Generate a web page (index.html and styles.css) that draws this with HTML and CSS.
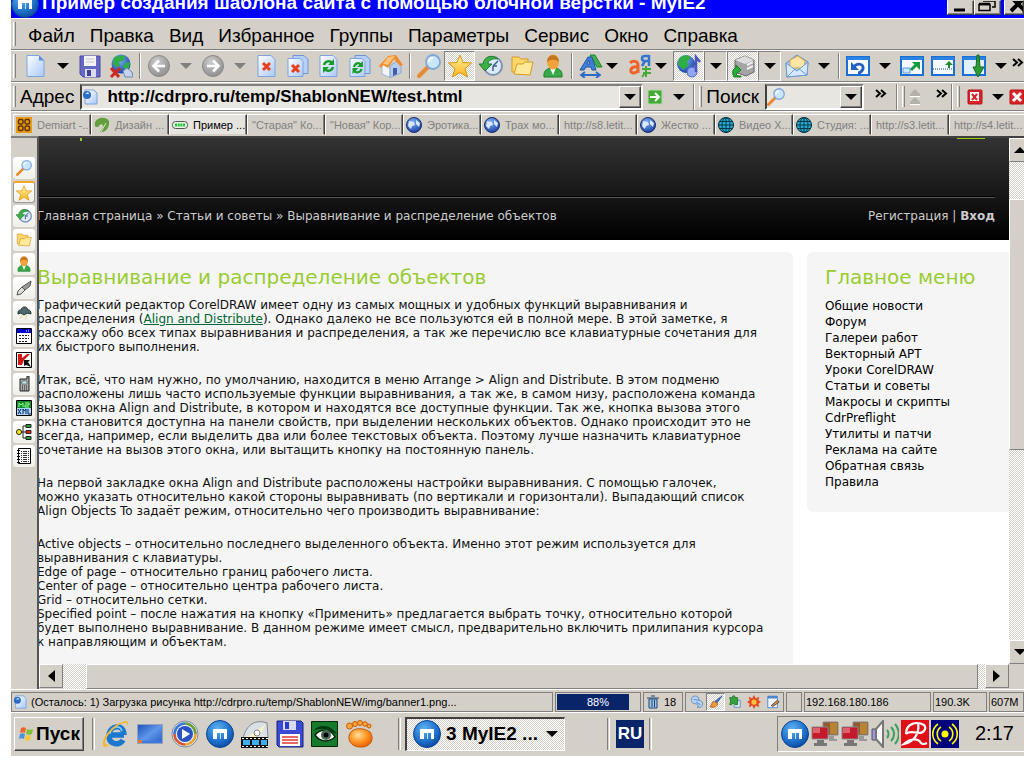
FILE: index.html
```html
<!DOCTYPE html>
<html lang="ru">
<head>
<meta charset="utf-8">
<title>Пример создания шаблона сайта с помощью блочной верстки - MyIE2</title>
<link rel="stylesheet" href="styles.css">
</head>
<body>
<svg class="defs" aria-hidden="true">
<defs>
<linearGradient id="gPaper" x1="0" y1="0" x2="1" y2="1"><stop offset="0" stop-color="#fff"/><stop offset="1" stop-color="#a9c8f8"/></linearGradient>
<radialGradient id="gBlue" cx=".4" cy=".3" r=".8"><stop offset="0" stop-color="#5fb2f2"/><stop offset=".6" stop-color="#1d6fc9"/><stop offset="1" stop-color="#0a3f94"/></radialGradient>
<radialGradient id="gGrey" cx=".4" cy=".3" r=".8"><stop offset="0" stop-color="#ccc"/><stop offset="1" stop-color="#888"/></radialGradient>
<radialGradient id="gOrange" cx=".4" cy=".35" r=".7"><stop offset="0" stop-color="#ffe0a0"/><stop offset=".5" stop-color="#ff9a2a"/><stop offset="1" stop-color="#e85a00"/></radialGradient>
<radialGradient id="gGlobe" cx=".4" cy=".3" r=".8"><stop offset="0" stop-color="#7fb4f5"/><stop offset="1" stop-color="#10349c"/></radialGradient>
<linearGradient id="gDesk" x1="0" y1="0" x2="1" y2="1"><stop offset="0" stop-color="#1d4fb8"/><stop offset=".5" stop-color="#5f97ea"/><stop offset="1" stop-color="#2a5cc4"/></linearGradient>
<linearGradient id="gGold" x1="0" y1="0" x2="0" y2="1"><stop offset="0" stop-color="#fff3a0"/><stop offset="1" stop-color="#f7b51c"/></linearGradient>
</defs>
<symbol id="i-new" viewBox="0 0 24 24"><path d="M3 1.500h12l5 5v16H3z" fill="url(#gPaper)" stroke="#7fa3dc"/><path d="M15 1.500v5h5z" fill="#5b8de0"/></symbol>
<symbol id="i-save" viewBox="0 0 24 24"><path d="M2 2h20v21H5l-3-3z" fill="#6767c4" stroke="#4b4ba8"/><path d="M6 2h12v10H6z" fill="#f4f4f4"/><path d="M8 5h8M8 8h8" stroke="#c4c4c4"/><path d="M7 15h11v8H7z" fill="#dcdcee"/><path d="M9 16h4v6H9z" fill="#3f3f9c"/></symbol>
<symbol id="i-netoff" viewBox="0 0 24 24"><circle cx="12" cy="10" r="9.500" fill="url(#gGlobe)"/><path d="M5 4c4-3 9-3 11-1l-2 4-4 1 1 4-4 1-3-3zM16 9l5-1-1 6-4 2-2-3z" fill="#2fae44"/><path d="M14 17l4-3 5 4 1 5h-8z" fill="#c4d4ec" stroke="#6f86b0"/><path d="M2 14l8 9M11 14l-9 9" stroke="#d0281e" stroke-width="3"/></symbol>
<symbol id="i-back" viewBox="0 0 24 24"><circle cx="12" cy="12" r="10.500" fill="url(#gGrey)" stroke="#888"/><path d="M18 12H7M12 6.500L6.500 12l5.500 5.500" fill="none" stroke="#fff" stroke-width="2.600"/></symbol>
<symbol id="i-fwd" viewBox="0 0 24 24"><circle cx="12" cy="12" r="10.500" fill="url(#gGrey)" stroke="#888"/><path d="M6 12h11M12 6.500l5.500 5.500-5.500 5.500" fill="none" stroke="#fff" stroke-width="2.600"/></symbol>
<symbol id="i-stop" viewBox="0 0 24 24"><path d="M3 1.500h13l4 4v17H3z" fill="url(#gPaper)" stroke="#7fa3dc"/><path d="M8 9l7 7M15 9l-7 7" stroke="#e8401c" stroke-width="3"/></symbol>
<symbol id="i-stopall" viewBox="0 0 24 24"><path d="M7 1.500h11l4 4v14H7z" fill="#b9d0f6" stroke="#6f93d4"/><path d="M2 4.500h12l3 3v15H2z" fill="url(#gPaper)" stroke="#7fa3dc"/><path d="M6 11l7 7M13 11l-7 7" stroke="#e8401c" stroke-width="3"/></symbol>
<symbol id="i-refresh" viewBox="0 0 24 24"><path d="M3 1.500h13l4 4v17H3z" fill="url(#gPaper)" stroke="#7fa3dc"/><path d="M7 11c1-4 6-5 8-2M16 13c-1 4-6 5-8 2" fill="none" stroke="#199a2a" stroke-width="2.400"/><path d="M17 5v6h-6zM6 19v-6h6z" fill="#199a2a"/></symbol>
<symbol id="i-refreshall" viewBox="0 0 24 24"><path d="M7 1.500h11l4 4v14H7z" fill="#b9d0f6" stroke="#6f93d4"/><path d="M2 4.500h12l3 3v15H2z" fill="url(#gPaper)" stroke="#7fa3dc"/><path d="M6 13c1-4 5-5 7-2M13.500 15c-1 4-6 4-7 2" fill="none" stroke="#199a2a" stroke-width="2.200"/><path d="M15 7v6H9zM4.500 20v-6h6z" fill="#199a2a"/></symbol>
<symbol id="i-home" viewBox="0 0 24 24"><path d="M3 12v8l8 3.500V14L8 8z" fill="#f4f6fc" stroke="#a3b4d6"/><path d="M11 23.500V12l7-5 4 5v7z" fill="#b7cdf0" stroke="#8ea6cf"/><path d="M0 12L9 2l8-1 7 10-3 1-6-7-6 9-5-3-2 3z" fill="#f28c28"/><path d="M9 3l7-1-7 9-5-1z" fill="#ffc27a"/><path d="M14 14h4v6l-4 2z" fill="#3f5fa8"/></symbol>
<symbol id="i-find" viewBox="0 0 24 24"><path d="M11 13l-9 9" stroke="#e78a32" stroke-width="4" stroke-linecap="round"/><circle cx="16" cy="8" r="7" fill="#c9e6fb" stroke="#7da7dc" stroke-width="1.800"/><path d="M12 8c0-3 2-4 4-4" stroke="#fff" stroke-width="2" fill="none"/></symbol>
<symbol id="i-star" viewBox="0 0 24 24"><path d="M12 1l3 7.500 8.500.5-6.500 5.500 2.500 8.500-7.500-4.500L4.500 23l2.500-8.500L.500 9 9 8.500z" fill="url(#gGold)" stroke="#d99412" stroke-linejoin="round"/></symbol>
<symbol id="i-history" viewBox="0 0 24 24"><circle cx="14" cy="12" r="9" fill="#dcebfa" stroke="#7d93b4" stroke-width="2"/><path d="M14 12l5-5M14 12h4M14 12v5" stroke="#43618f" stroke-width="1.500"/><path d="M19 5C14 0 5 2 4 10H0l6 7 7-7H9c0-4 5-6 10-5z" fill="#3fae49" stroke="#1f7d2c"/></symbol>
<symbol id="i-folder" viewBox="0 0 24 24"><path d="M2 3h7l2 2h7v13H2z" fill="#fbd66a" stroke="#d79b22"/><path d="M7 10h6l2-2h8l-3 13-16-1z" fill="#ffe99b" stroke="#d79b22"/></symbol>
<symbol id="i-user" viewBox="0 0 24 24"><path d="M3 23c-1-7 4-9 9-9s10 2 9 9z" fill="#37a948" stroke="#1e7f31"/><path d="M9 14l3 7 3-7z" fill="#fff"/><ellipse cx="12" cy="8" rx="6" ry="7.500" fill="#f0a23c"/><path d="M6 8c0-9 12-9 12 0-3-3-9-3-12 0z" fill="#c5751e"/></symbol>
<symbol id="i-afont" viewBox="0 0 24 24"><path d="M11 1h5l7 12h-5z" fill="#43b04c" stroke="#1f8230"/><path d="M1 16L9 3h4l4 13h-4l-1-3H7l-2 3zM8 10h3l-1-4z" fill="#3f80d8" stroke="#1d55a8"/><path d="M3 21h17M6 18l-4 3 4 3M17 18l4 3-4 3" fill="none" stroke="#2c6cc9" stroke-width="1.800"/></symbol>
<symbol id="i-atrans" viewBox="0 0 24 24"><path d="M2 9c3-3 8-2 8 2v8M10 13c-8-1-9 5-5 6 3 0 5-2 5-4" fill="none" stroke="#f0622c" stroke-width="3"/><path d="M21 1v11M21 2h-4c-4 0-4 5 0 5h4M17 7l-3 5" fill="none" stroke="#3274cf" stroke-width="2.500"/><path d="M14 15h9M18 12v11M15 19h8M14 23l3-4" fill="none" stroke="#43ab39" stroke-width="2"/></symbol>
<symbol id="i-music" viewBox="0 0 24 24"><circle cx="9" cy="10" r="9" fill="url(#gGlobe)"/><path d="M2 5c4-5 9-4 12-2l-4 5 2 3-6 5-5-6z" fill="#2fae44"/><circle cx="15" cy="18" r="5" fill="#8fa7f0" stroke="#4d61c4"/><path d="M19 18V3l4 5" fill="none" stroke="#4a55b8" stroke-width="2.500"/></symbol>
<symbol id="i-print" viewBox="0 0 24 24"><path d="M4 6l10-4 9 4v12l-8 4-11-4z" fill="#a4a4a4" stroke="#666"/><path d="M4 6l10-4 9 4-9 4z" fill="#ddd"/><path d="M16 11l6-3M16 15l6-3" stroke="#eee" stroke-width="2"/><path d="M10 23H3c-3-6 0-9 2-9V11l5 5-5 4c1 2 3 2 5 2z" fill="#27ae38" stroke="#127a22"/></symbol>
<symbol id="i-mail" viewBox="0 0 24 24"><path d="M1 9L12 1l11 7-1 13-20 2z" fill="#9fc6f4" stroke="#5f8fd0"/><path d="M5 6l8-4 7 5-1 7H5z" fill="#ffe6a6" stroke="#d9a541"/><path d="M1 9l11 8 11-9-1 13-20 2z" fill="#d5e9fc" stroke="#6b9ad6"/><path d="M2 23l8-8M22 21l-8-6" stroke="#6b9ad6"/></symbol>
<symbol id="i-win" viewBox="0 0 24 20"><path d="M1 1h22v18H1z" fill="#f4f9ff" stroke="#1a6fd0" stroke-width="2"/><path d="M1 1h22v3H1z" fill="#2b83e6"/></symbol>
<symbol id="i-undo" viewBox="0 0 24 20"><use href="#i-win"/><path d="M8 11c3-5 10-3 9 2-1 2-3 4-5 4" fill="none" stroke="#245fc0" stroke-width="2.800"/><path d="M5 6v8h8z" fill="#245fc0"/></symbol>
<symbol id="i-max" viewBox="0 0 24 20"><use href="#i-win"/><path d="M3 12h7v5H3z" fill="#cfe4fb" stroke="#5b9be2"/><path d="M11 14l5-5" stroke="#189a3c" stroke-width="3"/><path d="M12 6h8v8z" fill="#189a3c"/></symbol>
<symbol id="i-up" viewBox="0 0 24 20"><use href="#i-win"/><path d="M2 13h20" stroke="#1f4f90" stroke-dasharray="1 1"/><path d="M18 5l-4 4h3v3h2V9h3z" fill="#228a2c"/></symbol>
<symbol id="i-down" viewBox="0 0 24 22"><path d="M1 2h22v18H1z" fill="#e3effd" stroke="#1a6fd0" stroke-width="2"/><path d="M1 2h22v3H1z" fill="#2b83e6"/><path d="M15 0h2l1 12h4l-6 10-5-10h3z" fill="#2f9c38" stroke="#186a20"/></symbol>
<symbol id="i-page" viewBox="0 0 16 16"><path d="M3 1h9l3 3v11H3z" fill="url(#gPaper)" stroke="#7fa3dc"/><circle cx="5" cy="6" r="4" fill="#2b6cc4"/><path d="M3 5l3-2 1 2z" fill="#d4ecff"/></symbol>
<symbol id="i-go" viewBox="0 0 16 16"><rect x="1" y="1" width="14" height="14" rx="1" fill="#42ab36" stroke="#b8d8b0"/><path d="M3 8h9M8 4l4 4-4 4" fill="none" stroke="#fff" stroke-width="2"/></symbol>
<symbol id="i-chev" viewBox="0 0 12 10"><path d="M1 1l4 3.500L1 8M6 1l4 3.500L6 8" fill="none" stroke="#000" stroke-width="2"/></symbol>
<symbol id="i-raise" viewBox="0 0 12 16"><path d="M6 0l5 5v2H1V5zM6 8l5 5v2H1v-2z" fill="#b5b1aa"/><path d="M1 7.500h10M1 15.500h10" stroke="#fff"/></symbol>
<symbol id="i-redx" viewBox="0 0 16 16"><rect x="1" y="1" width="14" height="14" rx="1" fill="#d9252a" stroke="#b01318"/><path d="M3 3h9v9H3z" fill="#fff"/><path d="M5 5l5 6M10 5l-5 6" stroke="#d9252a" stroke-width="2"/></symbol>
<symbol id="i-redx2" viewBox="0 0 16 16"><rect x="1" y="1" width="14" height="14" rx="1" fill="#d9252a" stroke="#b01318"/><path d="M4 4l8 8M12 4l-8 8" stroke="#fff" stroke-width="3"/></symbol>
<symbol id="i-demi" viewBox="0 0 16 16"><path d="M0 0h16v16H0z" fill="#e99a16"/><rect x="2.500" y="2.500" width="4.500" height="4.500" rx="1.500" fill="none" stroke="#5a3606" stroke-width="1.500"/><rect x="9" y="2.500" width="4.500" height="4.500" rx="1.500" fill="none" stroke="#5a3606" stroke-width="1.500"/><rect x="2.500" y="9" width="4.500" height="4.500" rx="1.500" fill="none" stroke="#5a3606" stroke-width="1.500"/><rect x="9" y="9" width="4.500" height="4.500" rx="1.500" fill="none" stroke="#5a3606" stroke-width="1.500"/></symbol>
<symbol id="i-leaf" viewBox="0 0 16 16"><path d="M1 9c-2-8 10-11 14-5 1 8-5 12-9 11l3-5c1-3-3-4-4-1-1 1-2 2-4 0z" fill="#629e3c"/><path d="M7 15l5-9" stroke="#d6e9c6"/></symbol>
<symbol id="i-load" viewBox="0 0 16 16"><rect x="0.500" y="4.500" width="15" height="7" rx="3" fill="#e8f3e8" stroke="#555"/><path d="M3 8h10" stroke="#22c332" stroke-width="3" stroke-dasharray="2 .7"/></symbol>
<symbol id="i-globe" viewBox="0 0 16 16"><circle cx="8" cy="8" r="7.500" fill="url(#gGlobe)" stroke="#1c2f6a"/><path d="M3 4l5 1 1 3-3 1-1 3-3-3zM10 3l4 3-1 4-3-3z" fill="#dbe8fb"/></symbol>
<symbol id="i-grid" viewBox="0 0 16 16"><circle cx="8" cy="8" r="7.500" fill="#2aa9cf" stroke="#04272f"/><path d="M8 0v16M0 8h16M1 4.500h14M1 11.500h14" stroke="#05384a"/><ellipse cx="8" cy="8" rx="4" ry="7.500" fill="none" stroke="#05384a"/></symbol>
<symbol id="i-knife" viewBox="0 0 16 16"><path d="M15 1l-1 5-5 4-3-3z" fill="#999" stroke="#555"/><path d="M6 7l3 3-4 4-4 1 1-4z" fill="#ddd" stroke="#555"/></symbol>
<symbol id="i-cloud" viewBox="0 0 16 16"><path d="M2 9c0-3 2-3 3-3 1-4 6-4 7 0 2 0 3 1 3 4l-4-1-3 2-3-2-3 1z" fill="#4e6a6c" stroke="#1e3234"/><path d="M6 11l-2 4M11 11l-2 4" stroke="#e6d98a"/></symbol>
<symbol id="i-cal" viewBox="0 0 16 16"><path d="M.500.500h15v15H.500z" fill="#fff" stroke="#000"/><path d="M1 1h14v4H1z" fill="#00c"/><path d="M10 3h4" stroke="#fff" stroke-dasharray="1 1"/><path d="M3 7.500h10M3 10.500h10M3 13.500h8" stroke="#222" stroke-dasharray="2 1"/></symbol>
<symbol id="i-kav" viewBox="0 0 16 16"><path d="M.500.500h15v15H.500z" fill="#fff" stroke="#000"/><path d="M2 2h4v4l5-4h3L8 8l-2 5H2z" fill="#d01818"/><path d="M8 8h6l-2 2 3 5-5-2-2 1z" fill="#111"/></symbol>
<symbol id="i-phone" viewBox="0 0 16 16"><path d="M4 3h7V0h2v15H4z" fill="#aaa" stroke="#222"/><path d="M6 5h5v3H6z" fill="#bfe8ea" stroke="#333" stroke-width=".5"/><path d="M6 10h5M6 12h5M6 14h5" stroke="#222" stroke-dasharray="1 1"/></symbol>
<symbol id="i-xml" viewBox="0 0 16 16"><path d="M.500.500h15v15H.500z" fill="#a8d8f4" stroke="#000"/><path d="M1 1h14v7H1z" fill="#118c28"/><path d="M3 7V3l2 2 2-2v4M9 3h4v2H9v2h4" fill="none" stroke="#9f9"/><path d="M2 9l3 5M5 9l-3 5M7 14V9l1.500 2L10 9v5M12 9v5h3" fill="none" stroke="#026"/></symbol>
<symbol id="i-tree" viewBox="0 0 16 16"><path d="M3 8h7M7 2v12M7 2h3M7 14h3" fill="none" stroke="#222"/><circle cx="3" cy="8" r="2.500" fill="#fe0" stroke="#222"/><path d="M10 .500h5v3h-5zM10 12.500h5v3h-5z" fill="#1da83c" stroke="#222"/><path d="M10 6.500h5v3h-5z" fill="#e02020" stroke="#222"/></symbol>
<symbol id="i-note" viewBox="0 0 16 16"><path d="M2.500.500h12v15h-12z" fill="#fff" stroke="#000"/><path d="M5 3.500h8M5 5.500h8M5 7.500h8M5 9.500h8M5 11.500h8M5 13.500h8" stroke="#333" stroke-dasharray="1 1 4 1"/><path d="M1 2.500h3M1 5.500h3M1 8.500h3M1 11.500h3M1 14.500h3" stroke="#000"/></symbol>
<symbol id="i-myie" viewBox="0 0 28 28"><circle cx="14" cy="14" r="13.500" fill="url(#gBlue)" stroke="#0b4596"/><path d="M7 9h14v10h-3v-6h-7v6H7z" fill="#fff"/><path d="M14 13h1v6h-1z" fill="#cfe2f8"/></symbol>
<symbol id="i-flag" viewBox="0 0 16 16"><path d="M3 2c2-1 3-1 5 0L7 7C5 6 4 6 2 7z" fill="#f2622a"/><path d="M9 3c2 1 4 1 6 0l-1 5c-2 1-4 1-6 0z" fill="#7cc03a"/><path d="M2 8c2-1 3-1 5 0l-1 5c-2-1-3-1-5 0z" fill="#4b93e0"/><path d="M8 9c2 1 3 1 5 0l-1 5c-2 1-3 1-5 0z" fill="#fbc62c"/></symbol>
<symbol id="i-ie" viewBox="0 0 28 28"><path d="M23 15H10M23 15c0-12-15-10-15 1 0 9 11 10 14 4" fill="none" stroke="#1c78cf" stroke-width="5.500"/><path d="M21 11c-2-6-11-5-12 3" fill="none" stroke="#8fd2fa" stroke-width="1.500"/><path d="M3 27C-2 20 12 3 25 1c3 1 2 4 1 6 1-3 0-4-2-4C15 4 5 16 4 22c0 3 3 3 5 2-2 2-4 3-6 3z" fill="#f6b62b"/></symbol>
<symbol id="i-desk" viewBox="0 0 28 28"><path d="M1.500 4.500h25v19h-25z" fill="url(#gDesk)" stroke="#8fa2b8"/><path d="M2 21h24v2H2z" fill="#3e79df"/><path d="M2 20h4v3H2z" fill="#e0793a"/></symbol>
<symbol id="i-wmp" viewBox="0 0 28 28"><circle cx="14" cy="14" r="13" fill="#e8eef6" stroke="#7c8a9c"/><path d="M14 3.500a10.500 10.500 0 0 1 10.500 10.500" fill="none" stroke="#6a9f34" stroke-width="2.500"/><path d="M24.500 14a10.500 10.500 0 0 1-10.500 10.500" fill="none" stroke="#e8a426" stroke-width="2.500"/><path d="M14 24.500A10.500 10.500 0 0 1 3.500 14" fill="none" stroke="#d6542a" stroke-width="2.500"/><path d="M3.500 14A10.500 10.500 0 0 1 14 3.500" fill="none" stroke="#3e76d8" stroke-width="2.500"/><circle cx="14" cy="14" r="8" fill="#2b52c4"/><path d="M11 9l8 5-8 5z" fill="#fff"/></symbol>
<symbol id="i-disc" viewBox="0 0 28 28"><path d="M2 19C5 4 15-1 26 3l1 15z" fill="#dadfe6" stroke="#7c8794"/><path d="M6 17L25 4l-8 14z" fill="#f6f2c4"/><circle cx="16" cy="13" r="3" fill="#fff" stroke="#888"/><path d="M0 17h27v11H0z" fill="#111"/><path d="M2 20h7v5H2zM11 20h7v5h-7zM20 20h6v5h-6z" fill="#3cb0ec"/><path d="M1 18.500h26M1 26.500h26" stroke="#fff" stroke-dasharray="2 2"/></symbol>
<symbol id="i-tc" viewBox="0 0 28 28"><path d="M1 1h24l2 2v24H3l-2-2z" fill="#3a4ad4" stroke="#14207c"/><path d="M7 1h13v9H7z" fill="#d8dcec"/><path d="M9 2h4v7H9z" fill="#2a3aca"/><path d="M4 14h20v12H4z" fill="#fff"/><path d="M6 17h16M6 20h16M6 23h16" stroke="#e03434" stroke-width="1.500"/></symbol>
<symbol id="i-eye" viewBox="0 0 28 28"><path d="M.500 1.500h26v25H.500z" fill="#157a2c" stroke="#032c0c"/><path d="M2 11C9 3 20 5 26 14l-5-2C15 8 8 8 2 11z" fill="#031"/><path d="M4 15c6-7 16-6 20 2-7 6-15 5-20-2z" fill="#f4f8ee" stroke="#021" stroke-width="1.500"/><circle cx="15" cy="15" r="5" fill="#4a6d54"/><circle cx="15" cy="15" r="2.500" fill="#001"/></symbol>
<symbol id="i-foot" viewBox="0 0 28 28"><path d="M3 16c2-9 14-9 21-4 6 9-2 16-10 15-7 0-12-5-11-11z" fill="url(#gOrange)" stroke="#c65a08"/><g fill="#ffa63c" stroke="#c65a08"><circle cx="3.500" cy="6" r="3"/><circle cx="9" cy="4" r="2.500"/><circle cx="14" cy="3" r="2.500"/><circle cx="19" cy="4" r="2.300"/><circle cx="23" cy="6" r="2"/></g></symbol>
<symbol id="i-lan" viewBox="0 0 28 28"><path d="M12 2h15v13H12z" fill="#8f5a30" stroke="#888"/><path d="M19 3h7v11h-7z" fill="#b98432"/><path d="M18 16h5v3h3v2h-8z" fill="#999"/><path d="M1 7h16v12H1z" fill="#c41a2c" stroke="#888"/><path d="M2 8h7v5H2z" fill="#e0606c"/><path d="M6 20h7v3h3v3H3v-3h3z" fill="#777"/></symbol>
<symbol id="i-vol" viewBox="0 0 28 28"><path d="M1 9h4v11H1z" fill="#9a98e0" stroke="#555"/><path d="M5 9l7-8v26l-7-8z" fill="#f6f6f6" stroke="#777" stroke-width="2"/><path d="M16 10c2 2 2 6 0 8M20 7c4 4 4 10 0 14M24 4c5 6 5 14 0 20" fill="none" stroke="#3f9f5c" stroke-width="2"/></symbol>
<symbol id="i-avira" viewBox="0 0 28 28"><path d="M0 0h28v28H0z" fill="#e01018"/><path d="M5 14C5 3 16 1 23 5c3 3 0 8-5 8-5-1-10-2-13 1M17 4c2 9-4 18-14 20 7-6 14-6 17-1 2 2 4 1 6 0" fill="none" stroke="#fff" stroke-width="2.200"/></symbol>
<symbol id="i-radio" viewBox="0 0 28 28"><path d="M0 0h28v28H0z" fill="#00007c"/><circle cx="14" cy="14" r="3.500" fill="#ff0"/><path d="M10 7c-5 3-5 11 0 14M18 7c5 3 5 11 0 14M7 4c-7 5-7 15 0 20M21 4c7 5 7 15 0 20" fill="none" stroke="#ff0" stroke-width="1.600"/></symbol>
<symbol id="i-trash" viewBox="0 0 12 14"><path d="M2 4h8v9H2z" fill="#9cc3ee" stroke="#24456e"/><path d="M0 3h12M4 1h4M5 5v7M7.500 5v7" stroke="#24456e"/></symbol>
<symbol id="i-cloudlink" viewBox="0 0 16 16"><path d="M2 3c4-4 9-1 8 3 5 0 6 6 2 8H8c3-2 1-4-2-4-4 0-5-4-4-7z" fill="#b4d3f6" stroke="#5a86c4"/><path d="M4 5l6 1M7 8l5 3" stroke="#5a86c4"/></symbol>
<symbol id="i-brush" viewBox="0 0 16 16"><path d="M15 1l-6 8-2-2z" fill="#3b7ad2" stroke="#255a9f"/><path d="M1 13c2-1 2-5 5-6l4 3c-1 4-6 5-9 3z" fill="#ee9a35" stroke="#a9581a"/></symbol>
<symbol id="i-puzzle" viewBox="0 0 16 16"><path d="M7 6h7v8H7z" fill="#e4eefc" stroke="#5a86c4"/><path d="M2 3h3c0-3 3-3 3 0h3v8H8L6 9l-2 2H2l1-4z" fill="#35a33c" stroke="#1d7326"/></symbol>
<symbol id="i-sun" viewBox="0 0 16 16"><path d="M8 0l2 4 4-2-1 4 3 2-3 2 1 4-4-2-2 4-2-4-4 2 1-4-3-2 3-2-1-4 4 2z" fill="#e8461c"/><circle cx="8" cy="8" r="3" fill="#ffc23c"/></symbol>
<symbol id="i-edit" viewBox="0 0 16 16"><path d="M2 1.500h11v13H2z" fill="#f0f7ff" stroke="#4b86cf"/><path d="M2 1h11v3H2z" fill="#4b86cf"/><path d="M6 12l7-6 2 2-7 5z" fill="#f08c3a" stroke="#345"/></symbol>
</svg>

<div class="screen">
  <header class="titlebar">
    <svg class="ico-28"><use href="#i-myie"/></svg>
    <h1 class="title">Пример создания шаблона сайта с помощью блочной верстки - MyIE2</h1>
    <div class="winbtns">
      <button class="winbtn" aria-label="Свернуть"><svg viewBox="0 0 24 16"><path d="M5 10h11" stroke="#000" stroke-width="3"/></svg></button>
      <button class="winbtn" aria-label="Восстановить"><svg viewBox="0 0 24 16"><path d="M7 1h12v6h-3M3 4.500h11v6H3z" fill="none" stroke="#000" stroke-width="1.500"/><path d="M3 4h11" stroke="#000" stroke-width="2.500"/></svg></button>
      <button class="winbtn winbtn-close" aria-label="Закрыть"><svg viewBox="0 0 24 16"><path d="M7 -2l13 13M19 -2L6 11" stroke="#000" stroke-width="4"/></svg></button>
    </div>
  </header>

  <nav class="bar menubar"><i class="grip"></i>
    <button class="menu">Файл</button><button class="menu">Правка</button><button class="menu">Вид</button><button class="menu">Избранное</button><button class="menu">Группы</button><button class="menu">Параметры</button><button class="menu">Сервис</button><button class="menu">Окно</button><button class="menu">Справка</button>
  </nav>

  <div class="bar toolbar"><i class="grip"></i>
    <button class="tool" aria-label="Создать"><svg class="ico-24"><use href="#i-new"/></svg></button><button class="drop" aria-label="Ещё"></button>
    <button class="tool" aria-label="Сохранить"><svg class="ico-24"><use href="#i-save"/></svg></button>
    <button class="tool" aria-label="Автономно"><svg class="ico-24"><use href="#i-netoff"/></svg></button>
    <i class="sep"></i>
    <button class="tool" aria-label="Назад"><svg class="ico-24"><use href="#i-back"/></svg></button><button class="drop drop-off" aria-label="Ещё"></button>
    <button class="tool" aria-label="Вперёд"><svg class="ico-24"><use href="#i-fwd"/></svg></button><button class="drop drop-off" aria-label="Ещё"></button>
    <button class="tool" aria-label="Стоп"><svg class="ico-24"><use href="#i-stop"/></svg></button>
    <button class="tool" aria-label="Остановить все"><svg class="ico-24"><use href="#i-stopall"/></svg></button>
    <button class="tool" aria-label="Обновить"><svg class="ico-24"><use href="#i-refresh"/></svg></button>
    <button class="tool" aria-label="Обновить все"><svg class="ico-24"><use href="#i-refreshall"/></svg></button>
    <button class="tool" aria-label="Домой"><svg class="ico-24"><use href="#i-home"/></svg></button>
    <i class="sep"></i>
    <button class="tool" aria-label="Поиск"><svg class="ico-24"><use href="#i-find"/></svg></button>
    <button class="tool pressed" aria-label="Избранное"><svg class="ico-24"><use href="#i-star"/></svg></button>
    <button class="tool" aria-label="Журнал"><svg class="ico-24"><use href="#i-history"/></svg></button>
    <button class="tool" aria-label="Папки"><svg class="ico-24"><use href="#i-folder"/></svg></button>
    <button class="tool" aria-label="Пользователь"><svg class="ico-24"><use href="#i-user"/></svg></button>
    <i class="sep"></i>
    <button class="tool" aria-label="Размер шрифта"><svg class="ico-24"><use href="#i-afont"/></svg></button><button class="drop drop-tight" aria-label="Ещё"></button>
    <button class="tool" aria-label="Кодировка"><svg class="ico-24"><use href="#i-atrans"/></svg></button><button class="drop drop-tight" aria-label="Ещё"></button>
    <button class="tool pressed" aria-label="Мультимедиа"><svg class="ico-24"><use href="#i-music"/></svg></button><button class="drop drop-boxed" aria-label="Ещё"></button>
    <button class="tool pressed" aria-label="Прокси"><svg class="ico-24"><use href="#i-print"/></svg></button><button class="drop drop-boxed" aria-label="Ещё"></button>
    <button class="tool" aria-label="Почта"><svg class="ico-24"><use href="#i-mail"/></svg></button><button class="drop" aria-label="Ещё"></button>
    <i class="sep"></i>
    <button class="tool" aria-label="Отменить"><svg class="ico-24"><use href="#i-undo"/></svg></button><button class="drop" aria-label="Ещё"></button>
    <button class="tool" aria-label="Развернуть"><svg class="ico-24"><use href="#i-max"/></svg></button>
    <button class="tool" aria-label="Вверх"><svg class="ico-24"><use href="#i-up"/></svg></button>
    <button class="tool" aria-label="Вниз"><svg class="ico-24"><use href="#i-down"/></svg></button><button class="drop" aria-label="Ещё"></button>
    <svg class="chev"><use href="#i-chev"/></svg>
  </div>

  <div class="bar addressbar"><i class="grip"></i>
    <label class="bar-label" for="addr">Адрес</label>
    <div class="combo combo-wide"><svg class="ico-16"><use href="#i-page"/></svg><input class="addr" id="addr" type="text" value="http://cdrpro.ru/temp/ShablonNEW/test.html"><button class="combo-btn" aria-label="Список адресов"></button></div>
    <button class="go" aria-label="Переход"><svg class="ico-16"><use href="#i-go"/></svg></button><button class="drop" aria-label="Ещё"></button>
    <i class="sep"></i><i class="grip"></i>
    <label class="bar-label" for="find">Поиск</label>
    <div class="combo combo-find"><svg class="ico-18"><use href="#i-find"/></svg><input class="find" id="find" type="text"><button class="combo-btn" aria-label="Список запросов"></button></div>
    <svg class="chev chev-find"><use href="#i-chev"/></svg>
    <i class="sep"></i><i class="grip"></i>
    <svg class="raise"><use href="#i-raise"/></svg><svg class="chev chev-raise"><use href="#i-chev"/></svg>
    <i class="sep"></i><i class="grip"></i>
    <button class="close-tab" aria-label="Закрыть вкладку"><svg class="ico-16"><use href="#i-redx"/></svg></button><button class="drop" aria-label="Ещё"></button>
    <button class="close-all" aria-label="Закрыть все"><svg class="ico-16"><use href="#i-redx2"/></svg></button>
  </div>

  <div class="tabs">
    <button class="tab"><svg class="ico-16"><use href="#i-demi"/></svg>Demiart -...</button>
    <button class="tab"><svg class="ico-16"><use href="#i-leaf"/></svg>Дизайн ...</button>
    <button class="tab tab-on"><svg class="ico-16"><use href="#i-load"/></svg>Пример ...</button>
    <button class="tab">"Старая" Ко...</button>
    <button class="tab">"Новая" Кор...</button>
    <button class="tab"><svg class="ico-16"><use href="#i-globe"/></svg>Эротика...</button>
    <button class="tab"><svg class="ico-16"><use href="#i-globe"/></svg>Трах мо...</button>
    <button class="tab">http://s8.letit...</button>
    <button class="tab"><svg class="ico-16"><use href="#i-globe"/></svg>Жестко ...</button>
    <button class="tab"><svg class="ico-16"><use href="#i-grid"/></svg>Видео X...</button>
    <button class="tab"><svg class="ico-16"><use href="#i-grid"/></svg>Студия: ...</button>
    <button class="tab">http://s3.letit...</button>
    <button class="tab">http://s4.letit...</button>
  </div>

  <div class="work">
    <aside class="rail">
      <button class="rail-btn" aria-label="Поиск"><svg class="ico-16"><use href="#i-find"/></svg></button>
      <button class="rail-btn rail-on" aria-label="Избранное"><svg class="ico-16"><use href="#i-star"/></svg></button>
      <button class="rail-btn" aria-label="Журнал"><svg class="ico-16"><use href="#i-history"/></svg></button>
      <button class="rail-btn" aria-label="Папки"><svg class="ico-16"><use href="#i-folder"/></svg></button>
      <button class="rail-btn" aria-label="Пользователь"><svg class="ico-16"><use href="#i-user"/></svg></button>
      <button class="rail-btn" aria-label="Нож"><svg class="ico-16"><use href="#i-knife"/></svg></button>
      <button class="rail-btn" aria-label="Погода"><svg class="ico-16"><use href="#i-cloud"/></svg></button>
      <button class="rail-btn" aria-label="Календарь"><svg class="ico-16"><use href="#i-cal"/></svg></button>
      <button class="rail-btn" aria-label="Антивирус"><svg class="ico-16"><use href="#i-kav"/></svg></button>
      <button class="rail-btn" aria-label="Телефон"><svg class="ico-16"><use href="#i-phone"/></svg></button>
      <button class="rail-btn" aria-label="XML"><svg class="ico-16"><use href="#i-xml"/></svg></button>
      <button class="rail-btn" aria-label="Дерево"><svg class="ico-16"><use href="#i-tree"/></svg></button>
      <button class="rail-btn" aria-label="Заметки"><svg class="ico-16"><use href="#i-note"/></svg></button>
    </aside>
    <div class="view">
      <div class="view-row">
        <main class="page">
          <header class="site-head">
            <div class="banner"><i class="tick"></i><i class="badge"></i></div>
            <div class="crumbs">
              <div><a href="#">Главная страница</a> » <a href="#">Статьи и советы</a> » Выравнивание и распределение объектов</div>
              <div><a href="#">Регистрация</a> | <a href="#"><b>Вход</b></a></div>
            </div>
          </header>
          <div class="columns">
            <article class="card article">
              <h2 class="heading">Выравнивание и распределение объектов</h2>
              <p class="para">Графический редактор CorelDRAW имеет одну из самых мощных и удобных функций выравнивания и<br>распределения (<a class="link" href="#">Align and Distribute</a>). Однако далеко не все пользуются ей в полной мере. В этой заметке, я<br>расскажу обо всех типах выравнивания и распределения, а так же перечислю все клавиатурные сочетания для<br>их быстрого выполнения.</p>
              <p class="para">Итак, всё, что нам нужно, по умолчанию, находится в меню Arrange &gt; Align and Distribute. В этом подменю<br>расположены лишь часто используемые функции выравнивания, а так же, в самом низу, расположена команда<br>вызова окна Align and Distribute, в котором и находятся все доступные функции. Так же, кнопка вызова этого<br>окна становится доступна на панели свойств, при выделении нескольких объектов. Однако происходит это не<br>всегда, например, если выделить два или более текстовых объекта. Поэтому лучше назначить клавиатурное<br>сочетание на вызов этого окна, или вытащить кнопку на постоянную панель.</p>
              <p class="para">На первой закладке окна Align and Distribute расположены настройки выравнивания. С помощью галочек,<br>можно указать относительно какой стороны выравнивать (по вертикали и горизонтали). Выпадающий список<br>Align Objects To задаёт режим, относительно чего производить выравнивание:</p>
              <p class="para">Active objects – относительно последнего выделенного объекта. Именно этот режим используется для<br>выравнивания с клавиатуры.<br>Edge of page – относительно границ рабочего листа.<br>Center of page – относительно центра рабочего листа.<br>Grid – относительно сетки.<br>Specified point – после нажатия на кнопку «Применить» предлагается выбрать точку, относительно которой<br>будет выполнено выравнивание. В данном режиме имеет смысл, предварительно включить прилипания курсора<br>к направляющим и объектам.</p>
            </article>
            <nav class="card sidemenu">
              <h2 class="heading">Главное меню</h2>
              <ul class="links">
                <li><a href="#">Общие новости</a></li><li><a href="#">Форум</a></li><li><a href="#">Галереи работ</a></li><li><a href="#">Векторный АРТ</a></li><li><a href="#">Уроки CorelDRAW</a></li><li><a href="#">Статьи и советы</a></li><li><a href="#">Макросы и скрипты</a></li><li><a href="#">CdrPreflight</a></li><li><a href="#">Утилиты и патчи</a></li><li><a href="#">Реклама на сайте</a></li><li><a href="#">Обратная связь</a></li><li><a href="#">Правила</a></li>
              </ul>
            </nav>
          </div>
        </main>
        <div class="vscroll">
          <button class="sbtn sbtn-v" aria-label="Вверх"><svg viewBox="0 0 12 6"><path d="M6 0l6 6H0z"/></svg></button>
          <div class="vgap"></div><div class="vthumb"></div><div class="vtrack"></div>
          <button class="sbtn sbtn-v" aria-label="Вниз"><svg viewBox="0 0 12 6"><path d="M6 6l6-6H0z"/></svg></button>
        </div>
      </div>
      <div class="hscroll">
        <button class="sbtn" aria-label="Влево"><svg class="harrow" viewBox="0 0 8 12"><path d="M8 0v12L1 6z"/></svg></button>
        <div class="hgap"></div><div class="hthumb"></div><div class="htrack"></div>
        <button class="sbtn" aria-label="Вправо"><svg class="harrow" viewBox="0 0 8 12"><path d="M0 0v12l7-6z"/></svg></button>
        <div class="corner"></div>
      </div>
    </div>
  </div>

  <footer class="status">
    <div class="cell cell-main"><svg class="ico-12"><use href="#i-page"/></svg>(Осталось: 1) Загрузка рисунка http://cdrpro.ru/temp/ShablonNEW/img/banner1.png...</div>
    <div class="cell cell-load"><div class="load" style="width:88%"></div><span class="load-text">88%</span></div>
    <div class="cell cell-trash"><svg class="ico-12"><use href="#i-trash"/></svg>18</div>
    <div class="cell cell-icons">
      <button class="mini" aria-label="Связь"><svg class="ico-12"><use href="#i-cloudlink"/></svg></button>
      <button class="mini pressed" aria-label="Кисть"><svg class="ico-12"><use href="#i-brush"/></svg></button>
      <button class="mini" aria-label="Модули"><svg class="ico-12"><use href="#i-puzzle"/></svg></button>
      <button class="mini" aria-label="Фильтр"><svg class="ico-12"><use href="#i-sun"/></svg></button>
      <button class="mini" aria-label="Правка"><svg class="ico-12"><use href="#i-edit"/></svg></button>
    </div>
    <div class="cell cell-blank"></div>
    <div class="cell cell-ip">192.168.180.186</div>
    <div class="cell cell-speed">190.3K</div>
    <div class="cell cell-mem">607M</div>
  </footer>

  <footer class="taskbar">
    <button class="start"><svg class="ico-16"><use href="#i-flag"/></svg>Пуск</button>
    <i class="tgrip"></i>
    <div class="quick">
      <button class="q" aria-label="Internet Explorer"><svg class="ico-28"><use href="#i-ie"/></svg></button>
      <button class="q" aria-label="Рабочий стол"><svg class="ico-28"><use href="#i-desk"/></svg></button>
      <button class="q" aria-label="Проигрыватель"><svg class="ico-28"><use href="#i-wmp"/></svg></button>
      <button class="q" aria-label="MyIE2"><svg class="ico-28"><use href="#i-myie"/></svg></button>
      <button class="q" aria-label="Видео"><svg class="ico-28"><use href="#i-disc"/></svg></button>
      <button class="q" aria-label="Файлы"><svg class="ico-28"><use href="#i-tc"/></svg></button>
      <button class="q" aria-label="Просмотр"><svg class="ico-28"><use href="#i-eye"/></svg></button>
      <button class="q" aria-label="GOM"><svg class="ico-28"><use href="#i-foot"/></svg></button>
    </div>
    <i class="tgrip tgrip-far"></i>
    <button class="task pressed"><svg class="ico-28"><use href="#i-myie"/></svg><span>3 MyIE2 ...</span><i class="caret"></i></button>
    <div class="spacer"></div>
    <i class="tgrip"></i>
    <button class="lang">RU</button>
    <i class="tgrip tgrip-end"></i>
    <div class="tray">
      <svg class="ico-28"><use href="#i-myie"/></svg><svg class="ico-28"><use href="#i-lan"/></svg><svg class="ico-28"><use href="#i-lan"/></svg><svg class="ico-28"><use href="#i-vol"/></svg><svg class="ico-28"><use href="#i-avira"/></svg><svg class="ico-28"><use href="#i-radio"/></svg>
      <time class="clock">2:17</time>
    </div>
  </footer>
</div>
</body>
</html>
```
FILE: styles.css
```css
* { box-sizing: border-box; }
body { margin: 0; background: #fff; font-family: "Liberation Sans", Arial, sans-serif; color: #000; }
button, input { font: inherit; color: inherit; margin: 0; padding: 0; border: 0; background: none; border-radius: 0; }
button { display: flex; align-items: center; justify-content: center; flex: none; }
svg { display: block; flex: none; }
a { color: inherit; text-decoration: none; }
.defs { position: absolute; width: 0; height: 0; }
.ico-12 { width: 14px; height: 14px; }
.ico-16 { width: 16px; height: 16px; }
.ico-18 { width: 18px; height: 18px; }
.ico-24 { width: 24px; height: 24px; }
.ico-28 { width: 28px; height: 28px; }

.screen { height: 100vh; padding: 0 0 12px 11px; display: flex; flex-direction: column; overflow: hidden; }
.screen > * { flex: none; white-space: nowrap; overflow: hidden; }

.titlebar { height: 18px; background: #00f; display: flex; align-items: flex-end; gap: 3px; }
.title { flex: 1; margin: 0; padding-bottom: 3px; font-size: 19px; line-height: 24px; color: #fff; }
.winbtns { display: flex; align-self: flex-start; }
.winbtn { width: 27px; height: 15px; background: #d4d0c8; border: 1px solid; border-color: transparent #404040 #404040 #fff; box-shadow: inset -1px -1px #808080; overflow: hidden; }
.winbtn svg { width: 24px; height: 16px; }
.winbtn-close { margin-left: 3px; width: 20px; justify-content: flex-start; }

.bar { display: flex; align-items: center; background: #d4d0c8; border-top: 1px solid #fff; border-bottom: 1px solid #808080; }
.grip { flex: none; width: 3px; margin: 3px 4px 3px 2px; align-self: stretch; border-left: 1px solid #fff; border-right: 1px solid #808080; }
.sep { flex: none; width: 2px; margin: 0 2px 0 3px; height: 26px; border-left: 1px solid #808080; border-right: 1px solid #fff; }
.menubar { height: 32px; padding-top: 3px; font-size: 19px; }
.menubar .grip { margin-top: 0; margin-right: 5px; }
.menu { padding: 0 8px 0 7px; line-height: 24px; }
.toolbar { height: 32px; }
.tool { width: 31px; height: 30px; }
.pressed { background: conic-gradient(#fff 25%, #d4d0c8 0 50%, #fff 0 75%, #d4d0c8 0) 0 0 / 2px 2px; border: 1px solid; border-color: #808080 #fff #fff #808080; }
.drop { width: 23px; height: 30px; }
.drop::before, .combo-btn::before, .caret { content: ""; width: 0; border: 6px solid transparent; border-top-color: #000; border-bottom: 0; }
.drop-off::before { border-top-color: #808080; }
.drop-tight { width: 12px; margin-right: 6px; }
.drop-boxed { border: 1px solid; border-color: #808080 #fff #fff #808080; }
.chev { width: 12px; height: 10px; margin-bottom: 6px; }

.addressbar { height: 29px; }
.bar-label { font-size: 19px; line-height: 24px; padding: 0 6px 0 0; }
.combo { display: flex; align-items: center; height: 26px; background: #e8e6e1; border: 2px solid; border-color: #808080 #fff #fff #404040; min-width: 0; }
.combo-wide { flex: 1; }
.combo-find { width: 99px; }
.addr { flex: 1; min-width: 0; padding-left: 9px; font-size: 17px; font-weight: bold; }
.find { flex: 1; min-width: 0; }
.combo-btn { width: 22px; height: 22px; background: #d4d0c8; border: 1px solid; border-color: #fff #404040 #404040 #fff; box-shadow: inset -1px -1px #808080; }
.go { width: 24px; }
.chev-find { margin-left: 11px; margin-right: 6px; }
.raise { width: 12px; height: 16px; margin: 0 11px 0 0; }
.chev-raise { margin-left: 4px; }
.close-tab { width: 22px; }
.close-all { width: 15px; justify-content: flex-start; }

.tabs { height: 25px; padding: 2px 0 1px 2px; background: #d4d0c8; border-top: 1px solid #fff; display: flex; }
.tab { width: 78px; justify-content: flex-start; gap: 5px; padding: 0 2px; overflow: hidden; font-size: 11px; color: #808080; border: 1px solid; border-color: #fff #404040 #d4d0c8 #fff; box-shadow: inset -1px 0 #808080; white-space: nowrap; }
.tab:not(:has(svg)) { padding-left: 4px; }
.tab-on { color: #000; background: #e6e4df; }

.screen > .work { flex: 1; min-height: 0; display: flex; background: #d4d0c8; }
.rail { flex: none; width: 28px; padding: 19px 2px 0; border-right: 2px solid #555; border-top: 2px solid #808080; }
.rail-btn { width: 22px; height: 22px; margin-bottom: 2px; border-radius: 3px; background: linear-gradient(#fff, #f0efea); }
.rail-on { border: 1px solid #999; border-top: 2px solid #f5a623; }
.view { flex: 1; min-width: 0; display: flex; flex-direction: column; border-top: 2px solid #404040; }
.view-row { flex: 1; min-height: 0; display: flex; }
.page { flex: 1; min-width: 0; overflow: hidden; background: #fff; font-family: "DejaVu Sans", Verdana, sans-serif; font-size: 12px; }
.site-head { height: 102px; padding-right: 14px; background: linear-gradient(#333, #000); color: #ccc; }
.banner { height: 60px; display: flex; justify-content: space-between; align-items: flex-start; padding: 0 10px 0 41px; border-bottom: 1px solid #555; box-shadow: inset 0 -1px #000; }
.tick { width: 2px; height: 3px; background: #9c3; }
.badge { width: 28px; height: 1px; background: #9c0; }
.crumbs { display: flex; justify-content: space-between; margin-left: -2px; padding-top: 10px; line-height: 16px; }
.columns { display: flex; align-items: flex-start; gap: 14px; margin: 12px -10px 0 -2px; }
.card { background: #f5f5f5; border-radius: 6px; padding: 14px 18px 22px; white-space: nowrap; }
.article { flex: 1; min-width: 0; min-height: 420px; padding-left: 0; }
.sidemenu { width: 212px; }
.heading { margin: 0 0 10px; font-size: 20px; line-height: 22px; font-weight: normal; color: #9c3; }
.para { margin: 0 0 19px; line-height: 14px; color: #111; }
.link { color: #063; text-decoration: underline; }
.links { list-style: none; margin: 0; padding: 0; line-height: 16px; }

.vscroll { flex: none; width: 15px; display: flex; flex-direction: column; background: #d4d0c8; overflow: hidden; }
.sbtn { width: 24px; height: 24px; background: #d4d0c8; border: 1px solid; border-color: #fff #808080 #808080 #fff; }
.sbtn-v { width: 22px; }
.sbtn svg { width: 12px; height: 6px; }
.sbtn .harrow { width: 8px; height: 12px; }
.vgap, .vtrack, .hgap, .htrack { background: conic-gradient(#fff 25%, #d4d0c8 0 50%, #fff 0 75%, #d4d0c8 0) 0 0 / 2px 2px; }
.vgap { height: 37px; }
.vthumb { height: 251px; border-top: 1px solid #fff; border-left: 1px solid #fff; border-bottom: 1px solid #808080; }
.vtrack { flex: 1; }
.hscroll { flex: none; height: 25px; display: flex; }
.hgap { width: 23px; }
.hthumb { flex: 1; background: #d4d0c8; border: 1px solid; border-color: #fff #808080 #808080 #fff; }
.htrack { width: 7px; }
.corner { width: 15px; }

.status { height: 24px; padding: 2px 0 0; display: flex; gap: 2px; background: #d4d0c8; border-top: 1px solid #fff; font-size: 11px; border-bottom: 1px solid #fff; }
.cell { display: flex; align-items: center; flex: none; padding: 0 1px; border: 1px solid #808080; overflow: hidden; }
.cell-main { flex: 1; gap: 4px; min-width: 0; }
.cell-load { position: relative; width: 86px; padding: 1px; }
.load { height: 100%; background: #0a246a; }
.load-text { position: absolute; inset: 0; display: grid; place-items: center; color: #fff; }
.cell-trash { width: 40px; gap: 4px; padding-left: 2px; }
.cell-icons { width: 99px; }
.mini { width: 19px; height: 18px; }
.cell-blank { width: 16px; }
.cell-ip { width: 127px; }
.cell-speed { width: 54px; }
.cell-mem { width: 35px; }

.taskbar { height: 43px; display: flex; align-items: center; background: #d4d0c8; padding: 0 0 2px 3px; }
.start { width: 70px; height: 34px; gap: 2px; font-size: 19px; font-weight: bold; border: 1px solid; border-color: #fff #404040 #404040 #fff; box-shadow: inset -1px -1px #808080; }
.tgrip { flex: none; width: 3px; height: 32px; margin: 0 6px 0 8px; border-left: 1px solid #808080; border-right: 1px solid #fff; }
.quick { display: flex; gap: 7px; }
.tgrip-far { margin-left: 24px; margin-right: 4px; }
.task { width: 160px; height: 34px; gap: 5px; font-size: 19px; font-weight: bold; border-width: 2px 1px 1px 2px; border-color: #404040 #fff #fff #404040; }
.caret { margin-left: 3px; }
.spacer { width: 34px; flex: none; }
.lang { width: 28px; height: 28px; background: #0a246a; color: #fff; font-size: 17px; font-weight: bold; }
.tgrip-end { margin: 0 auto 0 5px; }
.tray { width: 247px; height: 36px; display: flex; align-items: center; gap: 2px; padding-left: 3px; border: 1px solid; border-right: 0; border-color: #808080 transparent #fff #808080; }
.clock { margin-left: 14px; font-size: 20px; }
```
